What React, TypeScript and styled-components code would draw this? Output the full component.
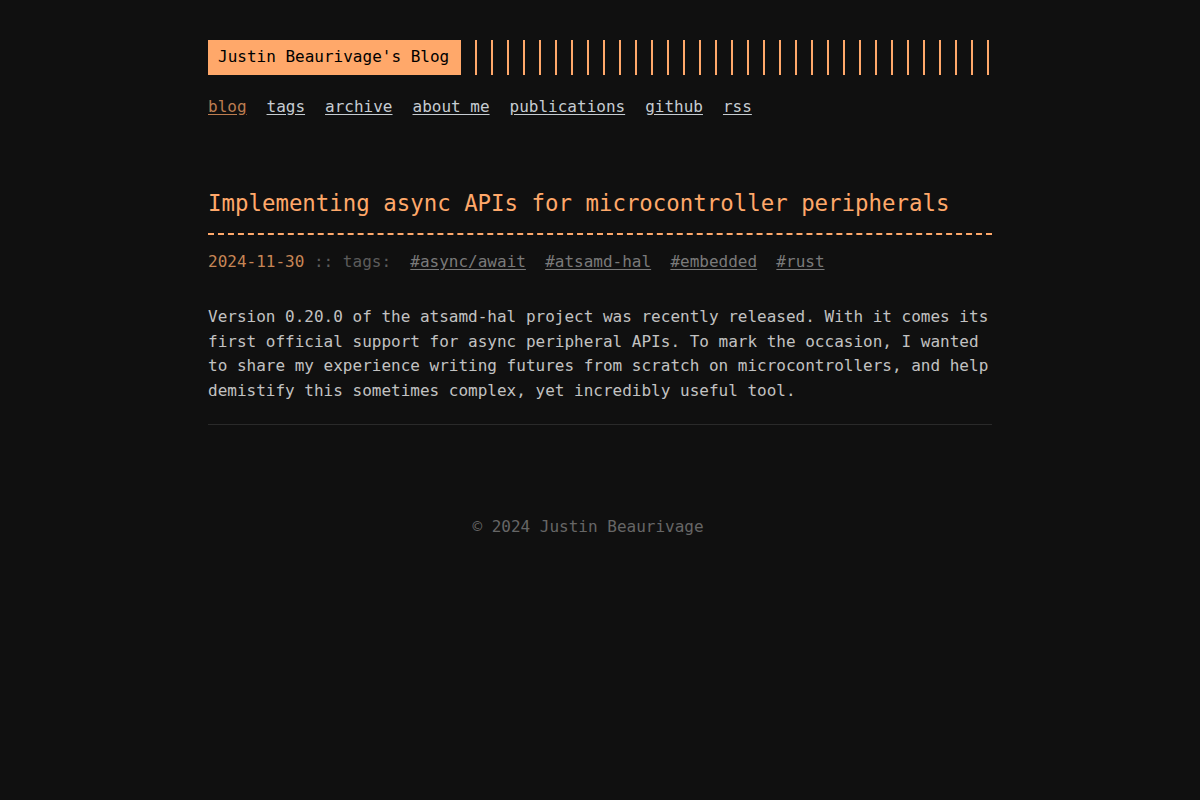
import React from "react";
import styled, { createGlobalStyle } from "styled-components";

const GlobalStyle = createGlobalStyle`
  html, body {
    margin: 0;
    padding: 0;
    background: #101010;
  }
  body {
    font-family: "DejaVu Sans Mono", "Liberation Mono", monospace;
    font-size: 16px;
    line-height: 1.54;
    color: #c2c2c2;
  }
  * { box-sizing: border-box; }
`;

const Container = styled.div`
  max-width: 864px;
  margin: 0 auto;
  padding: 40px;
  min-height: 100vh;
  display: flex;
  flex-direction: column;
`;

const Header = styled.header`
  display: flex;
  flex-direction: column;
`;

const HeaderInner = styled.div`
  display: flex;
  align-items: stretch;
`;

const LogoWrap = styled.div`
  display: flex;
  flex: 1;
  &::after {
    content: "";
    display: block;
    width: 100%;
    background: repeating-linear-gradient(
      90deg,
      #ffa86a,
      #ffa86a 2px,
      transparent 0,
      transparent 16px
    );
  }
`;

const Logo = styled.a`
  display: flex;
  align-items: center;
  background: #ffa86a;
  color: #000;
  padding: 5px 10px;
  text-decoration: none;
  white-space: nowrap;
`;

const Menu = styled.nav`
  margin: 20px 0;
`;

const MenuList = styled.ul`
  display: flex;
  flex-wrap: wrap;
  list-style: none;
  margin: 0;
  padding: 0;
`;

const MenuItem = styled.li`
  margin: 0 20px 10px 0;
`;

const MenuLink = styled.a<{ $active?: boolean }>`
  color: ${(p) => (p.$active ? "#bd7d50" : "#c6ccd2")};
  text-decoration: underline;
  text-underline-offset: 2px;
`;

const Main = styled.main`
  display: flex;
  flex-direction: column;
  margin-bottom: 50px;
`;

const Post = styled.article`
  margin: 20px 0 0;
  padding: 20px 0 0;
`;

const Title = styled.h1`
  margin: 0 0 15px;
  padding-bottom: 15px;
  font-size: 22.4px;
  line-height: 1.3;
  font-weight: normal;
  color: #ffa86a;
  border-bottom: 2px dashed #ffa86a;
`;

const Meta = styled.div`
  color: #5c5c5c;
`;

const DateText = styled.span`
  color: #c78656;
`;

const Tag = styled.a`
  margin-left: 2ch;
  color: #7a7a7a;
  text-decoration: underline;
  text-underline-offset: 2px;
`;

const Content = styled.div`
  margin-top: 30px;
`;

const Paragraph = styled.p`
  margin: 0;
`;

const Divider = styled.hr`
  width: 100%;
  border: none;
  height: 1px;
  background: #2a2a2a;
  margin: 20px 0 0;
`;

const Footer = styled.footer`
  padding: 40px 0;
`;

const FooterInner = styled.div`
  width: 760px;
  max-width: 100%;
  display: flex;
`;

const Copyright = styled.div`
  margin: 0 auto;
  text-align: center;
  color: #666666;
`;

const navItems = ["blog", "tags", "archive", "about me", "publications", "github", "rss"];
const tags = ["#async/await", "#atsamd-hal", "#embedded", "#rust"];

export default function App() {
  return (
    <>
      <GlobalStyle />
      <Container>
        <Header>
          <HeaderInner>
            <LogoWrap>
              <Logo href="#">Justin Beaurivage's Blog</Logo>
            </LogoWrap>
          </HeaderInner>
          <Menu>
            <MenuList>
              {navItems.map((item, i) => (
                <MenuItem key={item}>
                  <MenuLink href="#" $active={i === 0}>
                    {item}
                  </MenuLink>
                </MenuItem>
              ))}
            </MenuList>
          </Menu>
        </Header>
        <Main>
          <Post>
            <Title>Implementing async APIs for microcontroller peripherals</Title>
            <Meta>
              <DateText>2024-11-30</DateText> :: tags:
              {tags.map((t) => (
                <Tag key={t} href="#">
                  {t}
                </Tag>
              ))}
            </Meta>
            <Content>
              <Paragraph>
                Version 0.20.0 of the atsamd-hal project was recently released. With it comes its
                first official support for async peripheral APIs. To mark the occasion, I wanted
                to share my experience writing futures from scratch on microcontrollers, and help
                demistify this sometimes complex, yet incredibly useful tool.
              </Paragraph>
            </Content>
          </Post>
          <Divider />
        </Main>
        <Footer>
          <FooterInner>
            <Copyright>© 2024 Justin Beaurivage</Copyright>
          </FooterInner>
        </Footer>
      </Container>
    </>
  );
}
